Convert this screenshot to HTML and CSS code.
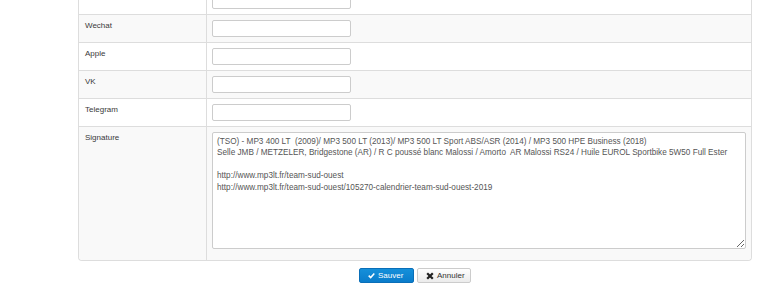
FILE: index.html
```html
<!DOCTYPE html>
<html lang="fr">
<head>
<meta charset="UTF-8">
<title>Profil - Réseaux sociaux</title>
<link rel="stylesheet" href="styles.css">
</head>
<body>

<div class="page">
    <table class="profile-table">
        <tr>
            <td class="label">Viber</td>
            <td class="field"><input type="text" class="text-input"></td>
        </tr>
        <tr class="odd">
            <td class="label">Wechat</td>
            <td class="field"><input type="text" class="text-input"></td>
        </tr>
        <tr>
            <td class="label">Apple</td>
            <td class="field"><input type="text" class="text-input"></td>
        </tr>
        <tr class="odd">
            <td class="label">VK</td>
            <td class="field"><input type="text" class="text-input"></td>
        </tr>
        <tr>
            <td class="label">Telegram</td>
            <td class="field"><input type="text" class="text-input"></td>
        </tr>
        <tr class="odd last">
            <td class="label">Signature</td>
            <td class="field sig-cell"><textarea class="signature">(TSO) - MP3 400 LT  (2009)/ MP3 500 LT (2013)/ MP3 500 LT Sport ABS/ASR (2014) / MP3 500 HPE Business (2018)
Selle JMB / METZELER, Bridgestone (AR) / R C poussé blanc Malossi / Amorto  AR Malossi RS24 / Huile EUROL Sportbike 5W50 Full Ester

http://www.mp3lt.fr/team-sud-ouest
http://www.mp3lt.fr/team-sud-ouest/105270-calendrier-team-sud-ouest-2019</textarea></td>
        </tr>
    </table>

    <div class="actions">
        <button class="btn btn-primary">
            <svg class="icon" viewBox="0 0 10 10" width="7" height="7"><path d="M1 5.2 L3.8 8 L9 2.2" fill="none" stroke="#fff" stroke-width="2.2"/></svg>
            Sauver
        </button>
        <button class="btn btn-default">
            <svg class="icon" viewBox="0 0 10 10" width="8" height="8"><path d="M1.5 1.5 L8.5 8.5 M8.5 1.5 L1.5 8.5" fill="none" stroke="#222" stroke-width="2.8"/></svg>
            Annuler
        </button>
    </div>
</div>

</body>
</html>
```
FILE: styles.css
```css
html, body {
    margin: 0;
    padding: 0;
    background: #fff;
    overflow: hidden;
}
body {
    font-family: "Liberation Sans", Arial, sans-serif;
    font-size: 8px;
    line-height: 1.428571;
    color: #3a3a3a;
}
.page {
    margin-top: -14px;
    padding-left: 78px;
    width: 674px;
}
.profile-table {
    width: 674px;
    border-collapse: separate;
    border-spacing: 0;
    border: 1px solid #ddd;
    border-top: none;
    border-radius: 0 0 4px 4px;
}
.profile-table td {
    border-top: 1px solid #ddd;
    padding: 5px;
    vertical-align: top;
}
.profile-table tr.odd td {
    background-color: #f9f9f9;
}
.profile-table tr.last td.label {
    border-bottom-left-radius: 4px;
}
.profile-table tr.last td.field {
    border-bottom-right-radius: 4px;
}
.profile-table td.label {
    width: 117px;
    border-right: 1px solid #ddd;
    padding-left: 6px;
}
.text-input {
    display: block;
    box-sizing: border-box;
    width: 139px;
    height: 17px;
    margin: 0;
    padding: 2px 4px;
    border: 1px solid #ccc;
    border-radius: 2px;
    background: #fff;
    font: inherit;
}
.sig-cell {
    padding-bottom: 11px !important;
}
.signature {
    display: block;
    box-sizing: border-box;
    width: 534px;
    height: 117px;
    margin: 0;
    padding: 3px 4px;
    border: 1px solid #ccc;
    border-radius: 2px;
    background: #fff;
    font-family: "Liberation Sans", Arial, sans-serif;
    font-size: 8.2px;
    line-height: 11.4px;
    color: #555;
}
.actions {
    display: flex;
    justify-content: center;
    gap: 3px;
    margin-top: 7px;
}
.btn {
    display: flex;
    align-items: center;
    gap: 3px;
    box-sizing: border-box;
    height: 15px;
    padding: 0 7px 0 8px;
    border-radius: 2px;
    font-family: "Liberation Sans", Arial, sans-serif;
    font-size: 8px;
    cursor: pointer;
}
.btn-primary {
    width: 55px;
    color: #fff;
    background: linear-gradient(#1590da, #0a7ccb);
    border: 1px solid #0a6fb8;
}
.btn-default {
    width: 54px;
    color: #333;
    background: linear-gradient(#fff, #ebebeb);
    border: 1px solid #ccc;
}
.icon {
    flex: none;
}
```
